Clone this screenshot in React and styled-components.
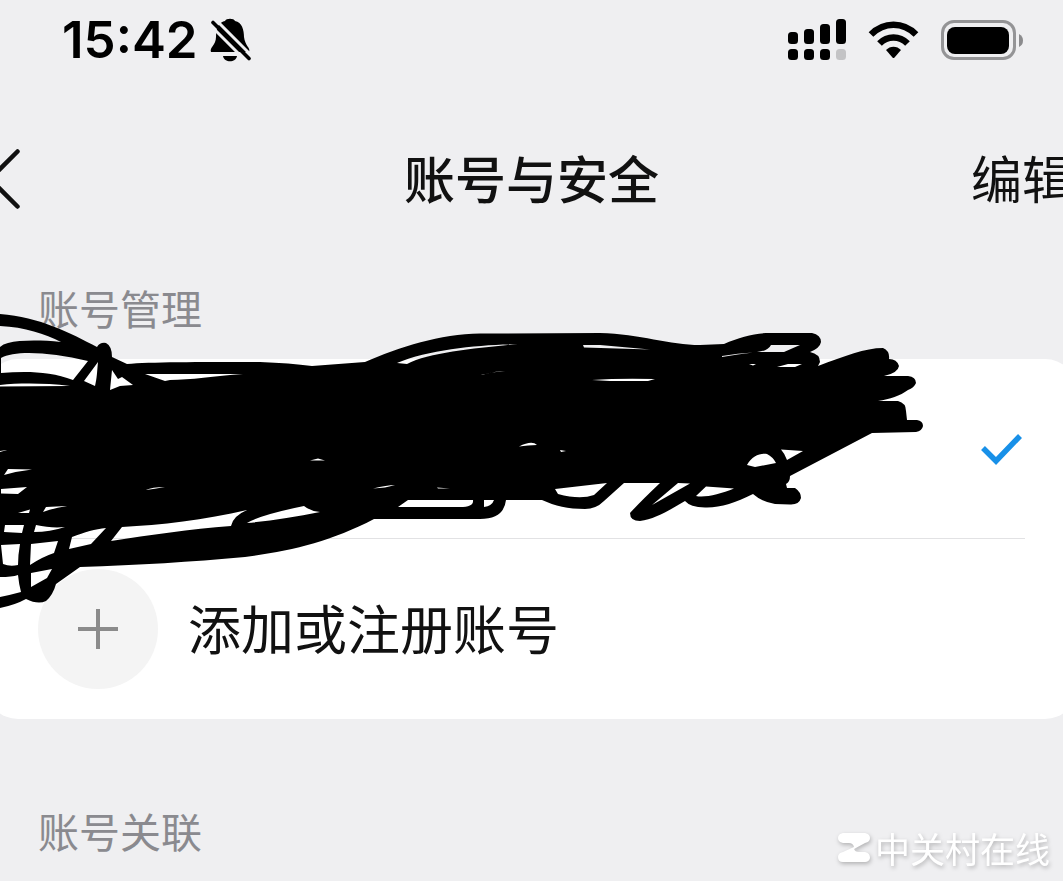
import React from 'react';
import styled, { createGlobalStyle } from 'styled-components';

const GlobalStyle = createGlobalStyle`
  * {
    box-sizing: border-box;
  }

  body {
    margin: 0;
    background: #efeff1;
    color: #111;
    font-family: 'Noto Sans CJK SC', sans-serif;
  }

  button {
    padding: 0;
    border: 0;
    background: none;
    color: inherit;
    font: inherit;
    cursor: pointer;
  }

  svg {
    display: block;
    flex: none;
  }
`;

const Page = styled.div`
  position: relative;
  min-height: 100vh;
  overflow: hidden;
`;

const StatusBar = styled.div`
  display: flex;
  align-items: center;
  justify-content: space-between;
  height: 80px;
  padding: 0 40px 0 62px;
  color: #000;
`;

const StatusGroup = styled.div`
  display: flex;
  align-items: center;
  gap: ${props => props.gap}px;
`;

const Time = styled.span`
  font-family: Inter, sans-serif;
  font-size: 51px;
  font-weight: 600;
  line-height: 80px;
`;

const NavBar = styled.header`
  display: grid;
  grid-template-columns: 1fr auto 1fr;
  align-items: center;
  height: 197px;
  margin: 0 -10px;
  padding-bottom: 3px;
`;

const BackButton = styled.button`
  justify-self: start;
`;

const Title = styled.h1`
  margin: 0;
  font-size: 51px;
  font-weight: 500;
  line-height: 72px;
`;

const EditButton = styled.button`
  justify-self: end;

  && {
    font-size: 51px;
    line-height: 72px;
  }
`;

const SectionTitle = styled.h2`
  margin: 0;
  padding: 0 38px;
  color: #8a8a8f;
  font-size: 41px;
  font-weight: 400;
  line-height: 60px;
`;

const Card = styled.section`
  position: relative;
  margin: 22px -14px 81px;
  padding: 0 52px;
  border-radius: 32px;
  background: #fff;
`;

const AccountRow = styled.div`
  display: flex;
  align-items: center;
  justify-content: flex-end;
  height: 180px;
  border-bottom: 1px solid #e2e2e4;
`;

const AddRow = styled.button`
  display: flex;
  align-items: center;
  gap: 30px;
  width: 100%;
  height: 180px;
  text-align: left;
`;

const AddIcon = styled.span`
  display: flex;
  align-items: center;
  justify-content: center;
  width: 120px;
  height: 120px;
  border-radius: 50%;
  background: #f4f4f4;
`;

const AddLabel = styled.span`
  padding-bottom: 4px;
  font-size: 53px;
  line-height: 76px;
`;

const ScribbleLayer = styled.svg`
  position: absolute;
  top: -59px;
  left: 14px;
  pointer-events: none;
`;

const Watermark = styled.div`
  position: absolute;
  right: 13px;
  bottom: 8px;
  display: flex;
  align-items: center;
  gap: 5px;
  color: #fff;
  font-size: 35px;
  line-height: 50px;
  filter: drop-shadow(1px 2px 2px rgba(0, 0, 0, 0.25));
`;

const MutedBell = () => (
  <svg width="42" height="44" viewBox="207 18 42 44" aria-hidden="true">
    <path d="M209 52c-2-4 5-7 5-15 0-11 4-15 9-16 1-3 9-3 10 0 7 1 9 9 9 16 1 9 7 11 5 15z" />
    <path d="M221 56h14c-1 7-13 7-14 0z" />
    <path d="M207 24l38 38M212 18l38 38" stroke="#efeff1" strokeWidth="3" />
    <path d="M211 22.500l36 36" stroke="#000" strokeWidth="3.6" strokeLinecap="round" />
  </svg>
);

const Signal = () => (
  <svg width="58" height="42" viewBox="788 19 58 42" aria-hidden="true">
    <rect x="788" y="32" width="10" height="12" rx="3.5" />
    <rect x="804" y="29" width="10" height="15" rx="3.5" />
    <rect x="820" y="24" width="10" height="20" rx="3.5" />
    <rect x="836" y="19" width="10" height="25" rx="3.5" />
    <rect x="788" y="49" width="10" height="11" rx="3.5" />
    <rect x="804" y="49" width="10" height="11" rx="3.5" />
    <rect x="820" y="49" width="10" height="11" rx="3.5" />
    <rect x="836" y="49" width="10" height="11" rx="3.5" fill="#c3c3c5" />
  </svg>
);

const Wifi = () => (
  <svg width="51" height="38" viewBox="868 21 51 38" aria-hidden="true">
    <g fill="none" stroke="#000" strokeWidth="6.6">
      <path d="M871 34.5C884 21.5 903 21.5 916 34.5" />
      <path d="M879.5 43.5C887.5 35.5 899.5 35.5 907.5 43.5" />
    </g>
    <path d="M886 50C890 45.5 897 45.5 901 50L894.5 57.500Q893.5 58.5 892.5 57.5Z" />
  </svg>
);

const Battery = () => (
  <svg width="82" height="40" viewBox="941 19 82 40" aria-hidden="true">
    <rect x="942.5" y="20.5" width="72" height="37" rx="11.5" fill="none" stroke="#949496" strokeWidth="3" />
    <rect x="947" y="26" width="62" height="27" rx="8" />
    <path d="M1019 33q4 2 4 6.5t-4 6.5z" fill="#8b8b8d" />
  </svg>
);

// outline of the marker strokes first, then every gap left between them
const Scribble = () => (
  <ScribbleLayer width="930" height="320" viewBox="0 300 930 320" aria-hidden="true">
    <path
      fillRule="evenodd"
      d="M0 314C40 317 70 333 97 347Q100 342 106 343Q112 346 112 357L127 364C150 362 200 362 260 362Q290 363 312 366L365 362
      C400 347 440 334 480 333.5L600 333C640 334 670 345 700 345L724 344C740 337 755 333 770 333L812 333Q821 335 821 342Q820 348 810 352
      Q820 354 820 362L818 366C845 356 865 348 883 348Q890 351 889 359Q897 359 899 366Q898 373 884 376L908 376Q916 377 916 383
      Q914 388 908 390C900 396 890 399 878 401L898 401Q906 403 906 411L907 420L917 420Q923 421 923 426Q922 431 916 432L872 433L790 476
      Q790 482 786 484L787 488L795 488Q801 492 801 498Q799 505 790 504.5L775 504Q762 502 753 494C735 503 720 508 705 507.5
      Q690 507 685 501C670 510 655 519 640 521Q630 521 630 513Q640 502 660 483L624 483L604 501Q596 509 585 509C568 509 555 506 542 500
      L506 500Q504 519 480 519L374 519C330 542 290 551 245 557C190 562 140 565 80 567L56 584Q53 595 46 601Q38 605 26 599Q15 605 0 608Z
      M0 326C25 327 45 334 61 342C40 340 20 340 8 343Q3 344 0 347Z
      M1 358C15 350 50 352 88 361L73 380C50 371 25 371 1 373Z
      M0 385C20 383 45 383 70 386L0 386.5Z
      M84 381L98 362C97 372 97 378 95 386Z
      M110 390L112 370L118 379L122 377L133 385L120 386Z
      M145 374L243 374C215 376 190 380 170 380L165 381Z
      M397 363C430 349 480 345 518 344C480 348 430 352 407 364Z
      M481 375Q496 371 505 371Q491 372 481 375Z
      M583 345L600 345L650 349.500L584 347.500Z
      M592 380Q620 378 655 379L648 381L610 381Z
      M771 345L800 345L784 352L757 352Q768 351 771 345Z
      M722 356Q738 353 753 352.500Q738 354 722 357Z
      M777 367L788 364L802 364L795 367Z
      M749 364L756 364L753 365.500Z
      M0 452L7 450L0 451Z
      M4 475L8 469L32 469.500Q18 471 4 475Z
      M1 489L27 487L18 494L1 493.500Z
      M18 513L30 509.500L29 513Z
      M43 512L46 507L67 506Q54 508 43 512Z
      M4 532L5 525L24 525L22 533Z
      M34 532L36 525C46 527 55 528 65 527Q50 532 34 532Z
      M1 545L20 544Q18 555 18 565Q10 567 3 564Z
      M31 544L58 541L54 553Q42 557 30 565Z
      M31 573L52 569L47 578L31 587Z
      M72 537C85 532 95 529 106 528L91 544L69 549Z
      M0 577Q12 577 18 575Q19 585 21 592Q10 595 0 597Z
      M111 541L122 527C160 525 205 520 247 510Q233 516 231 526C190 529 150 535 111 541Z
      M247 523Q260 515 304 506Q310 511 320 512C295 517 270 521 247 523Z
      M146 490Q152 487 165 487Q154 489 146 490Z
      M310 460.500L318 458.500L325 460.500Z
      M373 488.500Q387 485 395 485Q386 488 373 488.500Z
      M437 487.500L450 488.500L438 488.500Z
      M519 446.500Q532 440 537 445Q528 445 519 446.500Z
      M560 450L566 451L561 452Z
      M747 465C752 456 760 453 767 454Q773 457 776 463L755 467Z
      M781 449.500L803 451L787 460Q785 454 781 449.500Z
      M652 505L678 483L690 483.500Z
      M696 496L706 486.500L734 488.500C720 494 705 498 696 496Z
      M398 507L408 500L473 500Q474 507 460 507Z
      M484 500L494 500Q492 506 484 507Z
      M555 489L607 483L594 495Q580 500 558 494Z"
    />
  </ScribbleLayer>
);

const App = () => (
  <>
    <GlobalStyle />
    <Page>
      <StatusBar>
        <StatusGroup gap={11}>
          <Time>15:42</Time>
          <MutedBell />
        </StatusGroup>
        <StatusGroup gap={22}>
          <Signal />
          <Wifi />
          <Battery />
        </StatusGroup>
      </StatusBar>
      <NavBar>
        <BackButton aria-label="返回">
          <svg width="32" height="64" viewBox="-10 145 32 64" fill="none">
            <path
              d="M17.5 151.5L-10 179L17.5 206.5"
              stroke="#111"
              strokeWidth="4.5"
              strokeLinecap="round"
            />
          </svg>
        </BackButton>
        <Title>账号与安全</Title>
        <EditButton>编辑</EditButton>
      </NavBar>
      <SectionTitle>账号管理</SectionTitle>
      <Card>
        <AccountRow>
          <svg width="44" height="32" viewBox="981 433 44 32" aria-hidden="true">
            <path d="M983 448L996 461L1020 436" fill="none" stroke="#1890e8" strokeWidth="5.5" />
          </svg>
        </AccountRow>
        <AddRow>
          <AddIcon>
            <svg width="40" height="40" viewBox="0 0 40 40" aria-hidden="true">
              <path d="M20 0V40M0 20H40" stroke="#8b8b8b" strokeWidth="4" />
            </svg>
          </AddIcon>
          <AddLabel>添加或注册账号</AddLabel>
        </AddRow>
        <Scribble />
      </Card>
      <SectionTitle>账号关联</SectionTitle>
      <Watermark>
        <svg width="32" height="30" viewBox="0 0 32 30" fill="#fff" aria-hidden="true">
          <path d="M5 0H27Q32 1 32 5Q32 9 27 10L16 16Q17 19 21 19H27Q32 20 32 25Q31 29 27 29H5Q0 29 0 24Q0 20 5 19L16 14Q15 10 11 10H5Q0 9 0 5Q0 1 5 0Z" />
        </svg>
        中关村在线
      </Watermark>
    </Page>
  </>
);

export default App;
